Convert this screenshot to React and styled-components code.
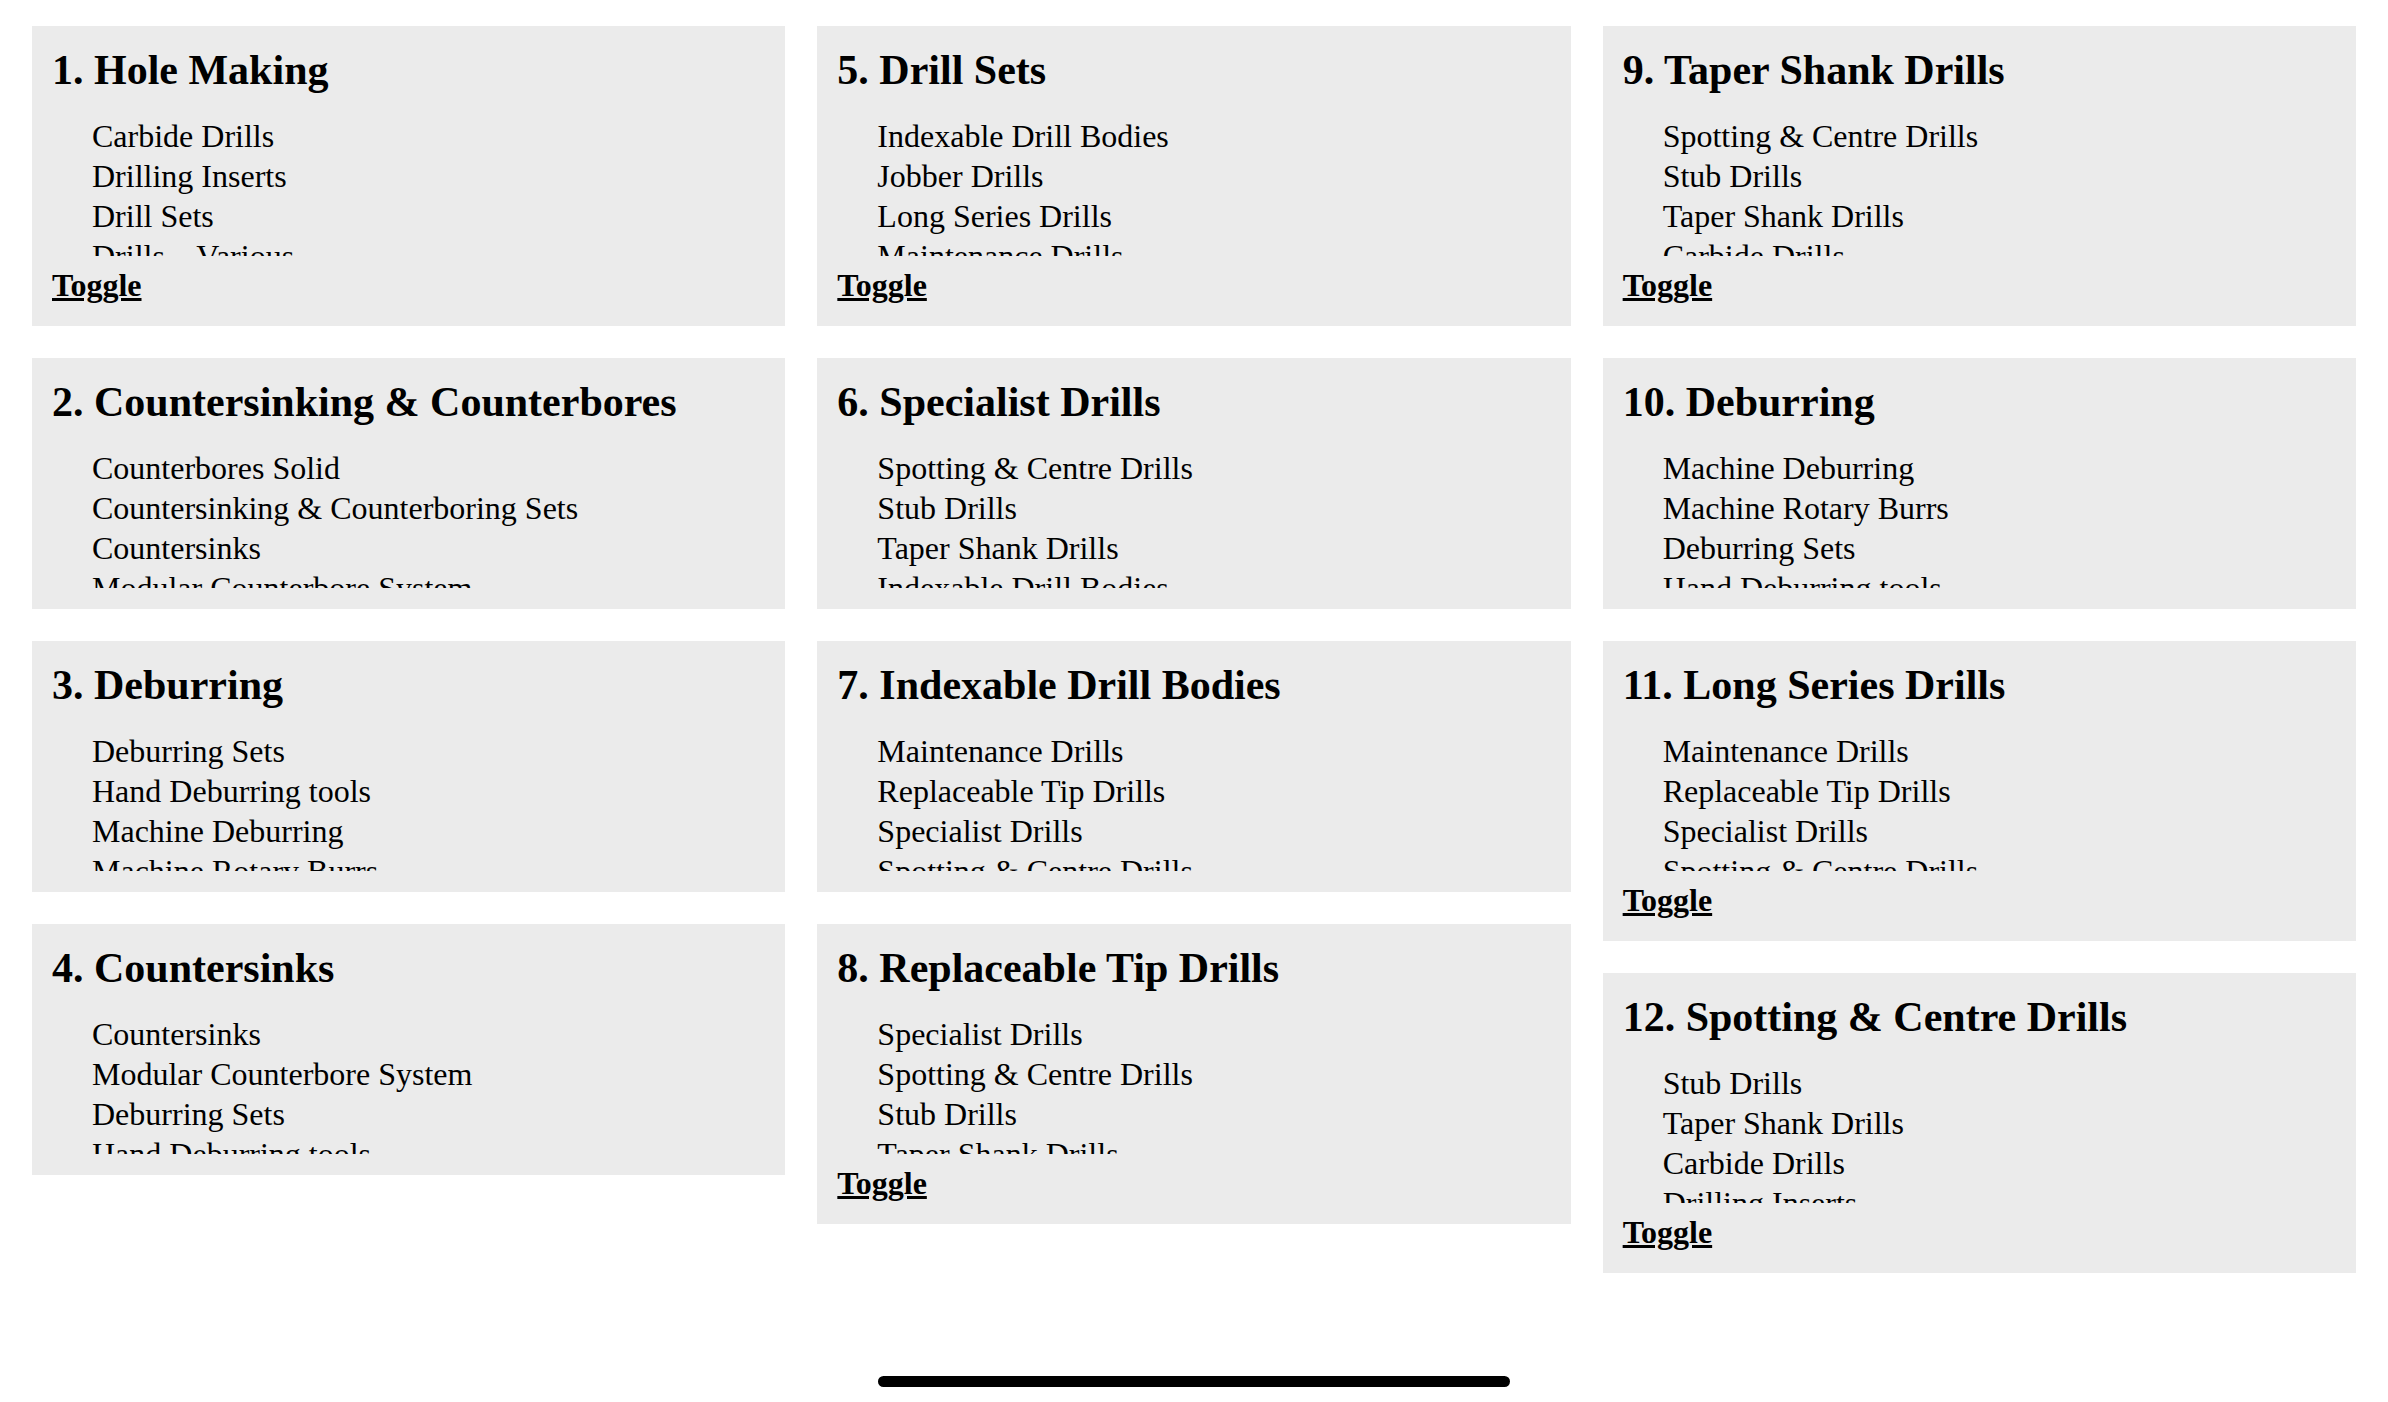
import styled, { createGlobalStyle } from "styled-components";

const GlobalStyle = createGlobalStyle`
  html, body {
    margin: 0;
    padding: 0;
    background: #fff;
  }
  body {
    font-family: "Liberation Serif", "Times New Roman", serif;
    color: #000;
  }
`;

const Page = styled.div`
  padding: 26px 32px 120px;
  display: grid;
  grid-template-columns: repeat(3, 1fr);
  column-gap: 32px;
  align-items: start;
`;

const Column = styled.div`
  display: flex;
  flex-direction: column;
  gap: 32px;
`;

const Card = styled.section`
  background: #ebebeb;
  padding: 20px 20px 21px;
  display: flex;
  flex-direction: column;
`;

const Title = styled.h2`
  margin: 0;
  font-size: 42px;
  font-weight: 700;
  line-height: normal;
`;

const List = styled.ul`
  list-style: none;
  margin: 22px 0 0;
  padding: 0 0 0 40px;
  height: 140px;
  overflow: hidden;
`;

const Item = styled.li`
  font-size: 32px;
  line-height: 40px;
`;

const Toggle = styled.a`
  margin-top: 9px;
  font-size: 32px;
  line-height: 40px;
  font-weight: 700;
  color: #000;
  text-decoration: underline;
  align-self: flex-start;
  cursor: pointer;
`;

const HomeBar = styled.div`
  position: fixed;
  left: 50%;
  bottom: 15px;
  width: 632px;
  height: 11px;
  margin-left: -316px;
  border-radius: 6px;
  background: #000;
`;

const columns = [
  [
    {
      title: "1. Hole Making",
      items: ["Carbide Drills", "Drilling Inserts", "Drill Sets", "Drills – Various", "Indexable Drill Bodies"],
    },
    {
      title: "2. Countersinking & Counterbores",
      items: ["Counterbores Solid", "Countersinking & Counterboring Sets", "Countersinks", "Modular Counterbore System"],
    },
    {
      title: "3. Deburring",
      items: ["Deburring Sets", "Hand Deburring tools", "Machine Deburring", "Machine Rotary Burrs"],
    },
    {
      title: "4. Countersinks",
      items: ["Countersinks", "Modular Counterbore System", "Deburring Sets", "Hand Deburring tools"],
    },
  ],
  [
    {
      title: "5. Drill Sets",
      items: ["Indexable Drill Bodies", "Jobber Drills", "Long Series Drills", "Maintenance Drills", "Replaceable Tip Drills"],
    },
    {
      title: "6. Specialist Drills",
      items: ["Spotting & Centre Drills", "Stub Drills", "Taper Shank Drills", "Indexable Drill Bodies"],
    },
    {
      title: "7. Indexable Drill Bodies",
      items: ["Maintenance Drills", "Replaceable Tip Drills", "Specialist Drills", "Spotting & Centre Drills"],
    },
    {
      title: "8. Replaceable Tip Drills",
      items: ["Specialist Drills", "Spotting & Centre Drills", "Stub Drills", "Taper Shank Drills", "Carbide Drills"],
    },
  ],
  [
    {
      title: "9. Taper Shank Drills",
      items: ["Spotting & Centre Drills", "Stub Drills", "Taper Shank Drills", "Carbide Drills", "Drilling Inserts"],
    },
    {
      title: "10. Deburring",
      items: ["Machine Deburring", "Machine Rotary Burrs", "Deburring Sets", "Hand Deburring tools"],
    },
    {
      title: "11. Long Series Drills",
      items: ["Maintenance Drills", "Replaceable Tip Drills", "Specialist Drills", "Spotting & Centre Drills", "Stub Drills"],
    },
    {
      title: "12. Spotting & Centre Drills",
      items: ["Stub Drills", "Taper Shank Drills", "Carbide Drills", "Drilling Inserts", "Drill Sets"],
    },
  ],
];

const CategoryCard = ({ title, items }) => (
  <Card>
    <Title>{title}</Title>
    <List>
      {items.map((item) => (
        <Item key={item}>{item}</Item>
      ))}
    </List>
    {items.length > 4 && <Toggle>Toggle</Toggle>}
  </Card>
);

const App = () => {
  return (
    <>
      <GlobalStyle />
      <Page>
        {columns.map((col, i) => (
          <Column key={i}>
            {col.map((card) => (
              <CategoryCard key={card.title} {...card} />
            ))}
          </Column>
        ))}
      </Page>
      <HomeBar />
    </>
  );
};

export default App;
